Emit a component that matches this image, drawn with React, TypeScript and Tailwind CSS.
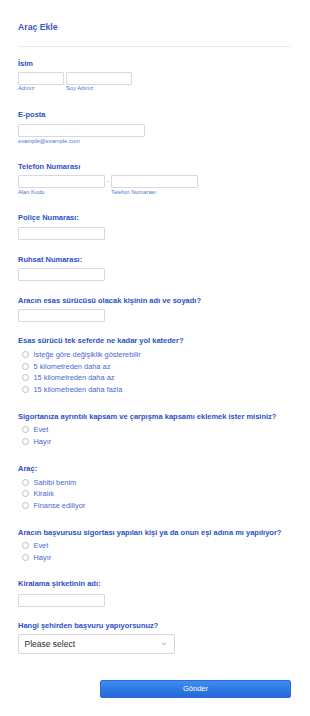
import { ChevronDown } from 'lucide-react';

const label = 'block text-[7.5px] leading-[9px] font-bold text-[#2c4fc8]';
const input = 'block h-[13px] border border-[#d9d9d9] rounded-[1px] bg-white';
const sub = 'block text-[5.75px] leading-[6px] text-[#5374d8]';

function Field({
  title,
  mt,
  gap,
  children,
}: {
  title: string;
  mt: string;
  gap: string;
  children: React.ReactNode;
}) {
  return (
    <div className={mt}>
      <span className={label}>{title}</span>
      <div className={gap}>{children}</div>
    </div>
  );
}

function Radios({ options }: { options: string[] }) {
  return (
    <div className="flex flex-col">
      {options.map((o) => (
        <label key={o} className="flex items-center h-[11.7px]">
          <span className="ml-[3.5px] w-[7px] h-[7px] rounded-full border border-[#bdbdbd] bg-white" />
          <span className="ml-[5px] text-[7.4px] leading-[9px] text-[#4667d4]">{o}</span>
        </label>
      ))}
    </div>
  );
}

export default function App() {
  return (
    <div className="w-[310px] min-h-[716px] bg-white pl-[18px] pr-[19px] font-['Liberation_Sans',Arial,sans-serif]">
      <h1 className="pt-[21.5px] text-[8.7px] leading-[10px] font-bold text-[#3858cf]">Araç Ekle</h1>
      <div className="mt-[14.5px] h-px bg-[#ebebeb]" />

      <Field title="İsim" mt="mt-[11.5px]" gap="mt-[4.5px]">
        <div className="flex gap-[2px]">
          <div>
            <div className={`${input} w-[46px]`} />
            <span className={sub}>Adınız</span>
          </div>
          <div>
            <div className={`${input} w-[66px]`} />
            <span className={sub}>Soy Adınız</span>
          </div>
        </div>
      </Field>

      <Field title="E-posta" mt="mt-[19px]" gap="mt-[4.5px]">
        <div className={`${input} w-[127px]`} />
        <span className={`${sub} mt-[1px]`}>example@example.com</span>
      </Field>

      <Field title="Telefon Numarası" mt="mt-[18px]" gap="mt-[4.5px]">
        <div className="flex">
          <div>
            <div className={`${input} w-[87px]`} />
            <span className={`${sub} mt-[1px]`}>Alan Kodu</span>
          </div>
          <span className="w-[6px] h-[13px] flex items-center justify-center text-[6px] text-[#5374d8]">-</span>
          <div>
            <div className={`${input} w-[87px]`} />
            <span className={`${sub} mt-[1px]`}>Telefon Numarası</span>
          </div>
        </div>
      </Field>

      <Field title="Poliçe Numarası:" mt="mt-[17.5px]" gap="mt-[5px]">
        <div className={`${input} w-[87px]`} />
      </Field>

      <Field title="Ruhsat Numarası:" mt="mt-[15px]" gap="mt-[4.5px]">
        <div className={`${input} w-[87px]`} />
      </Field>

      <Field title="Aracın esas sürücüsü olacak kişinin adı ve soyadı?" mt="mt-[15px]" gap="mt-[4px]">
        <div className={`${input} w-[87px]`} />
      </Field>

      <Field title="Esas sürücü tek seferde ne kadar yol kateder?" mt="mt-[13.5px]" gap="mt-[4px]">
        <Radios
          options={[
            'İsteğe göre değişiklik gösterebilir',
            '5 kilometreden daha az',
            '15 kilometreden daha az',
            '15 kilometreden daha fazla',
          ]}
        />
      </Field>

      <Field
        title="Sigortanıza ayrıntılı kapsam ve çarpışma kapsamı eklemek ister misiniz?"
        mt="mt-[16.5px]"
        gap="mt-[3.3px]"
      >
        <Radios options={['Evet', 'Hayır']} />
      </Field>

      <Field title="Araç:" mt="mt-[17px]" gap="mt-[3px]">
        <Radios options={['Sahibi benim', 'Kiralık', 'Finanse ediliyor']} />
      </Field>

      <Field
        title="Aracın başvurusu sigortası yapılan kişi ya da onun eşi adına mı yapılıyor?"
        mt="mt-[17px]"
        gap="mt-[2px]"
      >
        <Radios options={['Evet', 'Hayır']} />
      </Field>

      <Field title="Kiralama şirketinin adı:" mt="mt-[16px]" gap="mt-[5.8px]">
        <div className={`${input} w-[87px]`} />
      </Field>

      <Field title="Hangi şehirden başvuru yapıyorsunuz?" mt="mt-[14px]" gap="mt-[4.5px]">
        <div className="flex items-center justify-between w-[157px] h-[20px] border border-[#d6d6d6] rounded-[2px] bg-white pl-[5.5px] pr-[7px]">
          <span className="text-[8.5px] leading-[10px] text-[#2b2b2b]">Please select</span>
          <ChevronDown size={6} strokeWidth={3} className="text-[#777777]" />
        </div>
      </Field>

      <button className="mt-[25.5px] ml-[82px] w-[191px] h-[18.5px] rounded-[2px] border border-[#2a6fd6] bg-gradient-to-b from-[#3f8df0] to-[#2367d8] text-[7.5px] leading-[9px] text-white">
        Gönder
      </button>
    </div>
  );
}
